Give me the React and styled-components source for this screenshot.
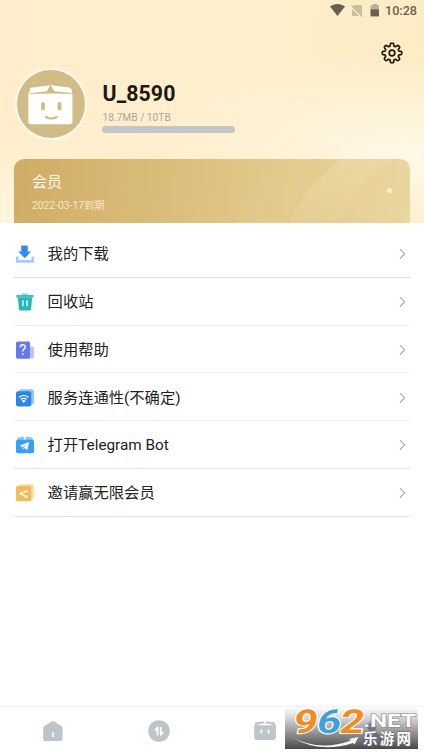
import React from "react";
import styled, { createGlobalStyle } from "styled-components";

const GlobalStyle = createGlobalStyle`
  * {
    box-sizing: border-box;
  }
  body {
    margin: 0;
    background: #fff;
    font-family: Roboto, "Noto Sans CJK SC", sans-serif;
  }
`;

// eight rounded teeth around the centre of a 24x24 box
const gearPath = () => {
  const points = [];
  for (let i = 0; i < 160; i++) {
    const a = (i / 160) * Math.PI * 2;
    const r = 8.4 + 1.4 * Math.tanh(2.2 * (Math.cos(8 * a) + 0.1));
    points.push(
      `${(12 + r * Math.cos(a)).toFixed(2)} ${(12 + r * Math.sin(a)).toFixed(2)}`
    );
  }
  return `M${points.join("L")}Z`;
};

const GearIcon = () => (
  <svg width="24" height="24" viewBox="0 0 24 24" fill="none" stroke="#1f1a12" strokeWidth="1.7">
    <path d={gearPath()} strokeLinejoin="round" />
    <circle cx="12" cy="12" r="2.8" />
  </svg>
);

const StatusIcons = () => (
  <svg width="52" height="16" viewBox="0 0 52 16">
    <path d="M0 3.6C4.3.2 10.7.2 15 3.6L7.5 13Z" fill="#68604d" />
    <path d="M24 2h8v11L22 3.8Z M22 5.8L29.5 13H22Z" fill="#c9bea0" />
    <path d="M21.4 2.4L32.6 13.7" stroke="#b5ab90" strokeWidth="1" />
    <path d="M43 1h4v1.2h2V6.5h-8.5V2.2H43Z" fill="#bbb094" />
    <path d="M40.5 6.3H49V13.4h-8.5Z" fill="#686050" />
  </svg>
);

const AvatarFace = () => (
  <svg width="68" height="68" viewBox="0 0 68 68">
    <path d="M13.5 17.8l18-2.4 2.2-.5 2.4.5 16.4 2 2 1.8 1 6v26a3 3 0 0 1-3 3H14.3a3 3 0 0 1-3-3V25Z" fill="#fff" />
    <path d="M13.3 23.3l16.6-2.1 3.6-6.6 3.7 6.6 17.3 1.9v.9l-20-.6-21.2.6Z" fill="#d1bb87" />
    <rect x="24" y="32" width="4" height="8.5" rx="2" fill="#d1bb87" />
    <rect x="40.5" y="32" width="4" height="8.5" rx="2" fill="#d1bb87" />
    <path d="M29 47q5 2.9 11 0" fill="none" stroke="#d1bb87" strokeWidth="2.1" strokeLinecap="round" />
  </svg>
);

const DownloadIcon = () => (
  <svg width="18" height="18" viewBox="0 0 18 18">
    <path d="M0 11.5h2.5V15h13v-3.5H18V17.8H0Z" fill="#a6cbfa" />
    <path d="M5.2.5h6.6v6h3.3L8.8 13.3 2.3 6.5h2.9Z" fill="#2f8bf7" />
  </svg>
);

const TrashIcon = () => (
  <svg width="18" height="18" viewBox="0 0 18 18">
    <path d="M5.5.4h6.3v1.5H5.5Z" fill="#83d9d7" />
    <path d="M.3 2h17.2v2.6H.3Z" fill="#3bc1c1" />
    <path d="M1.8 4.5h14.3l-1 11.7a1.5 1.5 0 0 1-1.4 1.3H4.3a1.5 1.5 0 0 1-1.4-1.3Z" fill="#27b6b9" />
    <path d="M7 7.3v6M11 7.3v6" stroke="#d9f8f5" strokeWidth="1.5" />
  </svg>
);

const HelpIcon = () => (
  <svg width="18" height="18" viewBox="0 0 18 18">
    <rect x="9" y="5.5" width="9" height="12" rx="1.5" fill="#bfc2fc" />
    <rect y=".4" width="14" height="17.3" rx="1.8" fill="#6678ef" />
    <path d="M4.3 6.3C4.3 3 9.3 3 9.3 6c0 2-2.6 2.1-2.6 4.4M6.7 12.2v1.8" fill="none" stroke="#fff" strokeWidth="1.4" />
  </svg>
);

const WifiIcon = () => (
  <svg width="18" height="18" viewBox="0 0 18 18">
    <rect x="3" y=".3" width="15" height="15.2" rx="2" fill="#91c6fa" />
    <rect y="2.2" width="15.3" height="15.4" rx="2" fill="#2d87e9" />
    <path d="M3 8.2q4.7-3.4 9.4 0M4.8 10.3q2.9-2 5.8 0" fill="none" stroke="#fff" strokeWidth="1.2" />
    <path d="M5.7 11.8q2-1.4 4 0l-2 2Z" fill="#fff" />
  </svg>
);

const TelegramIcon = () => (
  <svg width="18" height="18" viewBox="0 0 18 18">
    <path d="M2 1.4l5.5-.9.7 2 .9-2 6.9.9L18 5.5H0Z" fill="#82c9fb" />
    <rect y="3.7" width="18" height="13.6" rx="2" fill="#37a0f2" />
    <path d="M8 .3h1.7v3.1H8Z" fill="#fff" />
    <path d="M3.2 9.7L13.1 6l-1.7 8-3.3-2.1-1.5 1.6-.2-2.7Z" fill="#fff" />
    <path d="M6.9 11l3.4-2.4-2.5 2.9-.8 1.2Z" fill="#37a0f2" />
  </svg>
);

const ShareIcon = () => (
  <svg width="18" height="18" viewBox="0 0 18 18">
    <rect x="3" y=".3" width="15" height="15.2" rx="2" fill="#fbe0a0" />
    <rect y="1.8" width="15.3" height="15.5" rx="2" fill="#f1bd60" />
    <path d="M10.2 7.2L5 9.8l5.2 3" fill="none" stroke="#fff" strokeWidth="1.1" />
    <g fill="#fff">
      <circle cx="10.2" cy="7.2" r="1.3" />
      <circle cx="5" cy="9.8" r="1.4" />
      <circle cx="10.2" cy="12.8" r="1.3" />
    </g>
  </svg>
);

const Chevron = () => (
  <svg width="7" height="12" viewBox="0 0 7 12">
    <path d="M1 1.2L5.6 5.9 1 10.6" fill="none" stroke="#a3a3a3" strokeWidth="1.1" />
  </svg>
);

const HomeIcon = () => (
  <svg width="22" height="22" viewBox="0 0 22 22">
    <path d="M9.6 1.4a2.2 2.2 0 0 1 2.7 0l7 4.7a2.4 2.4 0 0 1 1.3 2.2v10.8a2 2 0 0 1-2 2H3.2a2 2 0 0 1-2-2V8.3a2.4 2.4 0 0 1 1.3-2.2Z" fill="#bec5c8" />
    <path d="M11 12v5" stroke="#fff" strokeWidth="1.6" />
  </svg>
);

const TransferIcon = () => (
  <svg width="22" height="22" viewBox="0 0 22 22">
    <circle cx="11" cy="11" r="10.8" fill="#bec5c8" />
    <path d="M9.6 15.3V7.5L7 10.4M12.8 7v7.8l2.5-2.7" fill="none" stroke="#fff" strokeWidth="1.8" strokeLinejoin="round" />
  </svg>
);

const BoxIcon = () => (
  <svg width="22" height="22" viewBox="0 0 22 22">
    <path d="M.8 4.3Q.8 2.8 2.3 2.3l7.3-1 .8 2h1.2l.8-2 7.3 1q1.6.5 1.6 2l.6 2v11.2a2.4 2.4 0 0 1-2.4 2.4H2.7A2.4 2.4 0 0 1 .2 17.5V6Z" fill="#bec5c8" />
    <path d="M2.3 4.7l7-1.1h3.5l7 1.1Q11 6 2.3 4.7Z" fill="#fff" />
    <path d="M7.4 9.6v3.8M14.6 9.6v3.8" stroke="#fff" strokeWidth="1.7" />
  </svg>
);

const ProfileIcon = () => (
  <svg width="22" height="22" viewBox="0 0 22 22">
    <circle cx="11" cy="6" r="5" fill="#516fae" />
    <path d="M2 20q0-9 9-9t9 9Z" fill="#516fae" />
  </svg>
);

const SiteLogo = () => (
  <svg width="133" height="42" viewBox="0 0 133 42" overflow="visible">
    <defs>
      <linearGradient id="plate" x1="0" y1="0" x2="0" y2="1">
        <stop offset="0" stopColor="#fff" stopOpacity="0.8" />
        <stop offset="0.5" stopColor="#a0a0a0" stopOpacity="0.92" />
        <stop offset="1" stopColor="#484848" />
      </linearGradient>
    </defs>
    <rect width="133" height="42" fill="url(#plate)" />
    <g fill="#56678f" opacity="0.65">
      <circle cx="87" cy="20" r="4.5" />
      <path d="M78 34q0-9 9-9t9 9Z" />
    </g>
    <g transform="translate(7 26) skewX(-10)" fontFamily="Roboto" fontWeight="700" fontSize="33" stroke="#fff" strokeWidth="2.2" paintOrder="stroke" strokeLinejoin="round">
      <text x="0" y="0" textLength="24" lengthAdjust="spacingAndGlyphs" fill="#f58b20">9</text>
      <text x="23.5" y="0" textLength="24" lengthAdjust="spacingAndGlyphs" fill="#429fdf">6</text>
      <text x="46.5" y="0" textLength="24" lengthAdjust="spacingAndGlyphs" fill="#f58b20">2</text>
    </g>
    <path d="M7 30Q34 45 66 33.5l-2-1.5 9.5-2-4 7.500-1.500-1.500Q34 47 7 30Z" fill="#f4f4f4" />
    <text x="78" y="19.500" textLength="53" lengthAdjust="spacingAndGlyphs" fontFamily="Roboto" fontWeight="700" fontSize="18" fill="#fff" stroke="#858585" strokeWidth="1" paintOrder="stroke">.NET</text>
    <text x="78" y="37" textLength="48" fontFamily="Noto Sans CJK SC" fontWeight="bold" fontSize="14.5" fill="#fff" stroke="#666" strokeWidth="0.8" paintOrder="stroke">乐游网</text>
  </svg>
);

const menu = [
  { label: "我的下载", icon: DownloadIcon, line: "#dedede" },
  { label: "回收站", icon: TrashIcon, line: "#ebebeb" },
  { label: "使用帮助", icon: HelpIcon, line: "#f4f4f4" },
  { label: "服务连通性(不确定)", icon: WifiIcon, line: "#f0f0f0" },
  { label: "打开Telegram Bot", icon: TelegramIcon, line: "#e5e5e5" },
  { label: "邀请赢无限会员", icon: ShareIcon, line: "#e2e2e2" }
];

export default function App() {
  return (
    <Screen>
      <GlobalStyle />
      <Header>
        <StatusBar>
          <StatusIcons />
          <Clock>10:28</Clock>
        </StatusBar>
        <Toolbar>
          <IconButton aria-label="settings">
            <GearIcon />
          </IconButton>
        </Toolbar>
        <Profile>
          <Avatar>
            <AvatarFace />
          </Avatar>
          <div>
            <UserName>U_8590</UserName>
            <Quota>18.7MB / 10TB</Quota>
            <QuotaBar />
          </div>
        </Profile>
        <MemberCard>
          <CardShine />
          <CardTitle>会员</CardTitle>
          <CardDate>2022-03-17到期</CardDate>
          <CardDot />
        </MemberCard>
      </Header>
      <Menu>
        {menu.map(({ label, icon: Icon, line }) => (
          <MenuRow key={label} $line={line}>
            <Icon />
            <MenuLabel>{label}</MenuLabel>
            <Chevron />
          </MenuRow>
        ))}
      </Menu>
      <TabBar>
        <Tab><HomeIcon /></Tab>
        <Tab><TransferIcon /></Tab>
        <Tab><BoxIcon /></Tab>
        <Tab><ProfileIcon /></Tab>
      </TabBar>
      <Watermark>
        <SiteLogo />
      </Watermark>
    </Screen>
  );
}

const Screen = styled.div`
  position: relative;
  display: flex;
  flex-direction: column;
  width: 424px;
  height: 755px;
  overflow: hidden;
  background: #fff;
`;

const Header = styled.header`
  display: flex;
  flex-direction: column;
  height: 223px;
  background: radial-gradient(ellipse 250px 110px at 96% 70%, rgba(255, 250, 236, 0.9) 0%, rgba(255, 248, 228, 0.55) 45%, rgba(255, 247, 224, 0) 100%),
    radial-gradient(ellipse 220px 80px at 0% 98%, #fff6db 0%, rgba(255, 245, 218, 0) 100%),
    linear-gradient(100deg, #ffedcc 0%, #feefce 50%, #fcebc1 100%);
`;

const StatusBar = styled.div`
  display: flex;
  align-items: center;
  justify-content: flex-end;
  gap: 3px;
  height: 22px;
  padding-right: 7px;
`;

const Clock = styled.span`
  width: 32px;
  font-size: 12.6px;
  font-weight: 500;
  line-height: 16px;
  color: #6b6350;
`;

const Toolbar = styled.div`
  display: flex;
  justify-content: flex-end;
  height: 46px;
  padding: 19px 20px 0 0;
`;

const IconButton = styled.button`
  width: 24px;
  height: 24px;
  padding: 0;
  border: 0;
  background: none;
`;

const Profile = styled.div`
  display: flex;
  height: 91px;
  padding-left: 15px;
  gap: 15.5px;
`;

const Avatar = styled.div`
  display: flex;
  align-items: center;
  justify-content: center;
  flex: none;
  width: 72px;
  height: 72px;
  border: 2px solid #fffaf0;
  border-radius: 50%;
  background: #d1bb87;
`;

const UserName = styled.div`
  padding-top: 13px;
  font-size: 21.3px;
  font-weight: 700;
  line-height: 26px;
  letter-spacing: 0.1px;
  color: #1d1a13;
`;

const Quota = styled.div`
  padding-top: 4px;
  font-size: 10.2px;
  line-height: 14px;
  color: #a9a699;
`;

const QuotaBar = styled.div`
  width: 133px;
  height: 7px;
  margin-top: 0.5px;
  margin-left: -0.5px;
  border-radius: 4px;
  background: #c2c6c7;
`;

const MemberCard = styled.section`
  position: relative;
  height: 64px;
  margin: 0 14px;
  padding: 11.5px 18px 0;
  overflow: hidden;
  border-radius: 10px 10px 0 0;
  background: linear-gradient(97deg, #d0ac65 0%, #dabd7b 38%, #e3ca8d 68%, #ead6a0 100%);
`;

const CardShine = styled.div`
  position: absolute;
  top: 0;
  right: 0;
  width: 122px;
  height: 64px;
  background: linear-gradient(160deg, rgba(255, 248, 218, 0.2), rgba(255, 248, 218, 0.1) 45%, rgba(255, 248, 218, 0) 80%);
  clip-path: polygon(42% 0, 84% 0, 66% 32%, 40% 100%, 0 100%, 18% 45%);
`;

const CardTitle = styled.div`
  font-size: 15px;
  line-height: 23px;
  color: #fffbea;
`;

const CardDate = styled.div`
  margin-top: 4.5px;
  font-size: 10.3px;
  line-height: 15px;
  color: #f7e8c4;
`;

const CardDot = styled.i`
  position: absolute;
  top: 29px;
  right: 18px;
  width: 5px;
  height: 5px;
  border-radius: 50%;
  background: #f8efd0;
`;

const Menu = styled.nav`
  display: flex;
  flex-direction: column;
  flex: 1;
  padding: 7px 14px 0;
`;

const MenuRow = styled.a`
  display: flex;
  align-items: center;
  height: 47.8px;
  padding: 1.6px 4px 0 2px;
  border-bottom: 1px solid ${props => props.$line};

  svg {
    flex: none;
  }
`;

const MenuLabel = styled.span`
  flex: 1;
  padding-left: 13.6px;
  font-size: 15.3px;
  line-height: 24px;
  color: #222;
`;

const TabBar = styled.nav`
  display: grid;
  grid-template-columns: repeat(4, 1fr);
  height: 49px;
  border-top: 1px solid #f3f3f3;
`;

const Tab = styled.a`
  display: flex;
  align-items: center;
  justify-content: center;
`;

const Watermark = styled.div`
  position: absolute;
  left: 285px;
  top: 707px;
  height: 42px;
`;
